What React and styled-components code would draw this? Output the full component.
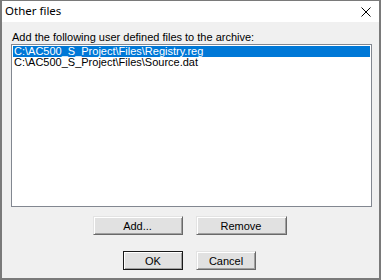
import React, { useState } from "react";
import styled, { createGlobalStyle } from "styled-components";

const Global = createGlobalStyle`
  html, body { margin: 0; padding: 0; background: #f0f0f0; }
  body { width: 381px; height: 280px; overflow: hidden; }
  * { box-sizing: border-box; }
`;

const Window = styled.div`
  width: 381px;
  height: 280px;
  background: #f0f0f0;
  border: 1px solid #7a7a7a;
  border-left-width: 2px;
  border-right-width: 2px;
  border-bottom-width: 2px;
  display: flex;
  flex-direction: column;
  font-family: "Liberation Sans", Arial, sans-serif;
  font-size: 11px;
  color: #000;
`;

const TitleBar = styled.div`
  height: 21px;
  background: #ffffff;
  display: flex;
  align-items: center;
  justify-content: space-between;
  padding: 0 0 0 3px;
`;

const Title = styled.span`
  font-family: "Noto Sans", "Open Sans", sans-serif;
  font-size: 11.5px;
  line-height: 1;
  margin-top: -1px;
`;

const CloseBtn = styled.div`
  width: 26px;
  height: 21px;
  display: flex;
  align-items: center;
  justify-content: center;
`;

const Body = styled.div`
  flex: 1;
  display: flex;
  flex-direction: column;
  padding: 9px 8px 0 9px;
`;

const Label = styled.div`
  height: 13px;
  line-height: 13px;
  padding-left: 1px;
`;

const ListBox = styled.div`
  width: 361px;
  height: 163px;
  background: #fff;
  border: 1px solid #828790;
  padding: 1px;
  display: flex;
  flex-direction: column;
`;

const Row = styled.div`
  height: 11px;
  line-height: 11px;
  padding-left: 1px;
  white-space: nowrap;
  background: ${(p) => (p.$selected ? "#0078d7" : "transparent")};
  color: ${(p) => (p.$selected ? "#fff" : "#000")};
`;

const ButtonRow = styled.div`
  display: flex;
  justify-content: center;
  gap: 13px;
  margin-top: ${(p) => p.$top}px;
  padding-right: 3px;
`;

const Button = styled.button`
  width: ${(p) => p.$w}px;
  height: 19px;
  font-family: "Liberation Sans", Arial, sans-serif;
  font-size: 11px;
  color: #000;
  background: #e1e1e1;
  padding: 0;
  border: 1px solid;
  box-shadow: inset 1px 1px 0 #fff, inset -1px -1px 0 #a0a0a0;
  border-top-color: ${(p) => (p.$default ? "#1a1a1a" : "#e3e3e3")};
  border-left-color: ${(p) => (p.$default ? "#1a1a1a" : "#e3e3e3")};
  border-right-color: ${(p) => (p.$default ? "#1a1a1a" : "#696969")};
  border-bottom-color: ${(p) => (p.$default ? "#1a1a1a" : "#696969")};
`;

const files = [
  "C:\\AC500_S_Project\\Files\\Registry.reg",
  "C:\\AC500_S_Project\\Files\\Source.dat",
];

export default function App() {
  const [sel] = useState(0);
  return (
    <>
      <Global />
      <Window>
        <TitleBar>
          <Title>Other files</Title>
          <CloseBtn>
            <svg width="10" height="10" viewBox="0 0 10 10">
              <path d="M0.5 0.5 L9.5 9.5 M9.5 0.5 L0.5 9.5" stroke="#000" strokeWidth="1" />
            </svg>
          </CloseBtn>
        </TitleBar>
        <Body>
          <Label>Add the following user defined files to the archive:</Label>
          <ListBox>
            {files.map((f, i) => (
              <Row key={f} $selected={i === sel}>
                {f}
              </Row>
            ))}
          </ListBox>
          <ButtonRow $top={9}>
            <Button $w={90}>Add...</Button>
            <Button $w={91}>Remove</Button>
          </ButtonRow>
          <ButtonRow $top={16}>
            <Button $w={60} $default>OK</Button>
            <Button $w={60}>Cancel</Button>
          </ButtonRow>
        </Body>
      </Window>
    </>
  );
}
